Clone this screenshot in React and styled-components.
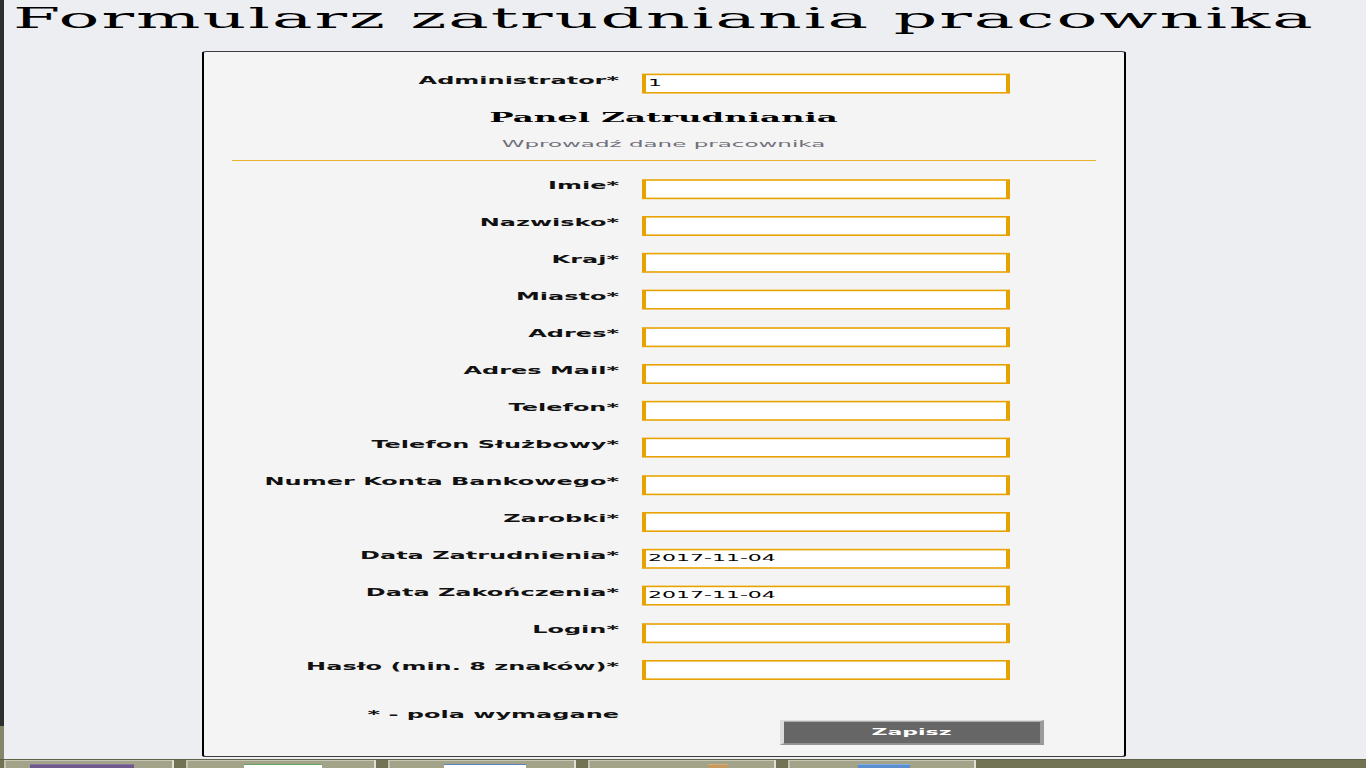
import React from "react";
import styled, { createGlobalStyle } from "styled-components";

const Global = createGlobalStyle`
  html, body {
    margin: 0;
    padding: 0;
    width: 1366px;
    height: 768px;
    overflow: hidden;
    background: #edeef2;
  }
  #root {
    width: 1366px;
    height: 768px;
    overflow: hidden;
  }
`;

/* The captured screen is stretched 2x horizontally and squeezed to 0.8 vertically */
const Stage = styled.div`
  width: 683px;
  height: 960px;
  transform: scale(2, 0.8);
  transform-origin: 0 0;
  display: flex;
  flex-direction: column;
`;

const Screen = styled.div`
  flex: 1;
  min-height: 0;
  display: flex;
  overflow: hidden;
`;

const Edge = styled.div`
  flex: none;
  width: 1.5px;
  background: linear-gradient(#2e2e2e 0, #2e2e2e 908px, #85856a 908px);
`;

const Page = styled.main`
  flex: 1;
  background: #edeef2;
  padding-left: 5px;
`;

const Title = styled.h1`
  margin: 0;
  padding-top: 3px;
  font: 400 34px/40px "DejaVu Serif", "Liberation Serif", serif;
  letter-spacing: 1px;
  color: #000;
  white-space: nowrap;
`;

const Panel = styled.section`
  margin: 20.5px 0 0 94.5px;
  width: 461.5px;
  box-sizing: border-box;
  border: 1px solid #000;
  border-radius: 2px;
  background: #f4f4f4;
  padding: 27.75px 0 14.25px;
`;

const Row = styled.div`
  display: grid;
  grid-template-columns: 207.5px 184px;
  column-gap: 11.5px;
  align-items: start;
`;

const Label = styled.label`
  padding-top: 1.5px;
  text-align: right;
  white-space: nowrap;
  font: 700 12px/15px "DejaVu Sans", Verdana, sans-serif;
  color: #111;
`;

const Input = styled.input`
  display: block;
  width: 184px;
  height: 25px;
  margin: 0;
  box-sizing: border-box;
  border: 2px solid #e8a200;
  background: #fff;
  padding: 0 1px 2px;
  font: 400 11px "DejaVu Sans", Verdana, sans-serif;
  color: #000;
  outline: none;
`;

const Heading = styled.h2`
  margin: 20.5px 0 0;
  text-align: center;
  font: 700 16.2px/18px "DejaVu Serif", "Liberation Serif", serif;
  color: #000;
`;

const Subtitle = styled.p`
  margin: 17.55px 0 0;
  text-align: center;
  font: 400 11.5px/14px "DejaVu Sans", Verdana, sans-serif;
  color: #70707a;
`;

const Divider = styled.div`
  margin: 12.5px 14px 0;
  height: 1.25px;
  background: #e6a400;
`;

const Fields = styled.div`
  margin-top: 22.5px;
  display: flex;
  flex-direction: column;
  gap: 21.25px;
`;

const FooterRow = styled(Row)`
  margin-top: 35.85px;
`;

const Note = styled.span`
  text-align: right;
  white-space: nowrap;
  font: 700 12px/15px "DejaVu Sans", Verdana, sans-serif;
  color: #111;
`;

const ButtonCell = styled.div`
  padding-top: 14.15px;
`;

const SaveButton = styled.button`
  display: block;
  margin: 0 0 0 68.5px;
  width: 132.5px;
  height: 31.25px;
  box-sizing: border-box;
  border: 2px solid;
  border-color: #dcdcdc #9a9a9a #9a9a9a #dcdcdc;
  background: #666;
  color: #fff;
  font: 700 11px "DejaVu Sans", Verdana, sans-serif;
  padding: 0;
`;

const Taskbar = styled.footer`
  flex: none;
  height: 11.25px;
  box-sizing: border-box;
  background: #727255;
  border-top: 1.25px solid #55553f;
  display: flex;
  gap: 6.5px;
  padding-left: 1.75px;
`;

const TaskButton = styled.div`
  width: ${(p) => p.$w}px;
  box-sizing: border-box;
  background: #a3a38a;
  border-top: 1.5px solid #cfcfbf;
  border-left: 1px solid #c4c4b2;
  border-right: 1px solid #e0e0d4;
  display: flex;
  align-items: flex-end;
`;

const TaskIcon = styled.span`
  margin-left: ${(p) => p.$x}px;
  width: ${(p) => p.$w}px;
  height: 3.75px;
  background: ${(p) => p.$c};
  border-top: 1px solid ${(p) => p.$e};
`;

const fields = [
  { label: "Imie*" },
  { label: "Nazwisko*" },
  { label: "Kraj*" },
  { label: "Miasto*" },
  { label: "Adres*" },
  { label: "Adres Mail*" },
  { label: "Telefon*" },
  { label: "Telefon Służbowy*" },
  { label: "Numer Konta Bankowego*" },
  { label: "Zarobki*" },
  { label: "Data Zatrudnienia*", value: "2017-11-04" },
  { label: "Data Zakończenia*", value: "2017-11-04" },
  { label: "Login*" },
  { label: "Hasło (min. 8 znaków)*", type: "password" },
];

const tasks = [
  { w: 85, x: 12.5, iw: 51.5, c: "#6e5a8c", e: "#8f7aa8" },
  { w: 94.5, x: 28, iw: 38.5, c: "#ffffff", e: "#3f8a3a" },
  { w: 93.5, x: 26.5, iw: 41, c: "#ffffff", e: "#2f62b0" },
  { w: 93.5, x: 59, iw: 9.5, c: "#c99a60", e: "#d9b080" },
  { w: 94, x: 34, iw: 26, c: "#5c8fd0", e: "#8ab4e6" },
];

export default function App() {
  return (
    <>
      <Global />
      <Stage>
        <Screen>
          <Edge />
          <Page>
            <Title>Formularz zatrudniania pracownika</Title>
            <Panel>
              <Row>
                <Label htmlFor="admin">Administrator*</Label>
                <Input id="admin" defaultValue="1" />
              </Row>
              <Heading>Panel Zatrudniania</Heading>
              <Subtitle>Wprowadź dane pracownika</Subtitle>
              <Divider />
              <Fields>
                {fields.map((f, i) => (
                  <Row key={f.label}>
                    <Label htmlFor={`f${i}`}>{f.label}</Label>
                    <Input
                      id={`f${i}`}
                      type={f.type || "text"}
                      defaultValue={f.value || ""}
                    />
                  </Row>
                ))}
              </Fields>
              <FooterRow>
                <Note>* - pola wymagane</Note>
                <ButtonCell>
                  <SaveButton type="button">Zapisz</SaveButton>
                </ButtonCell>
              </FooterRow>
            </Panel>
          </Page>
        </Screen>
        <Taskbar>
          {tasks.map((t, i) => (
            <TaskButton key={i} $w={t.w}>
              <TaskIcon $x={t.x} $w={t.iw} $c={t.c} $e={t.e} />
            </TaskButton>
          ))}
        </Taskbar>
      </Stage>
    </>
  );
}
